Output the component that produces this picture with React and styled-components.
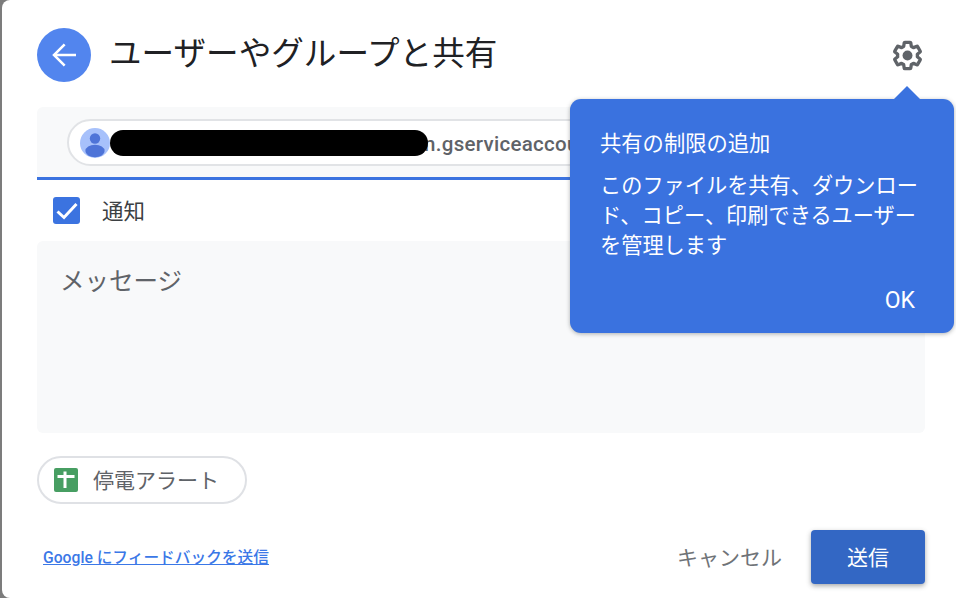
import React from "react";
import styled, { createGlobalStyle } from "styled-components";

const Global = createGlobalStyle`
  html, body {
    margin: 0;
    background: #7c7c7c;
  }
  * {
    box-sizing: border-box;
  }
`;

const FONT = `Roboto, "Noto Sans CJK JP", sans-serif`;

const App = () => {
  return (
    <>
      <Global />
      <Dialog>
        <Header>
          <BackButton>
            <svg width="32" height="32" viewBox="0 0 24 24" fill="none" stroke="#fff" strokeWidth="1.9">
              <path d="M21 12H4.5" />
              <path d="M12.5 4l-8 8 8 8" />
            </svg>
          </BackButton>
          <Title>ユーザーやグループと共有</Title>
          <GearButton>
            <svg width="33" height="33" viewBox="0 0 24 24" fill="none">
              <path
                stroke="#5f6368"
                strokeWidth="2.4"
                strokeLinejoin="round"
                d="M19.14 12.94c.04-.3.06-.61.06-.94 0-.32-.02-.64-.07-.94l2.03-1.58c.18-.14.23-.41.12-.61l-1.92-3.32c-.12-.22-.37-.29-.59-.22l-2.39.96c-.5-.38-1.03-.7-1.62-.94l-.36-2.54c-.04-.24-.24-.41-.48-.41h-3.84c-.24 0-.43.17-.47.41l-.36 2.54c-.59.24-1.13.57-1.62.94l-2.39-.96c-.22-.08-.47 0-.59.22L2.74 8.87c-.12.21-.08.47.12.61l2.03 1.58c-.05.3-.09.63-.09.94s.02.64.07.94l-2.03 1.58c-.18.14-.23.41-.12.61l1.92 3.32c.12.22.37.29.59.22l2.39-.96c.5.38 1.03.7 1.62.94l.36 2.54c.05.24.24.41.48.41h3.84c.24 0 .44-.17.47-.41l.36-2.54c.59-.24 1.13-.56 1.62-.94l2.39.96c.22.08.47 0 .59-.22l1.92-3.32c.12-.22.07-.47-.12-.61l-2.01-1.58z"
              />
              <circle cx="12" cy="12" r="3.6" fill="#5f6368" />
            </svg>
          </GearButton>
        </Header>

        <RecipientBox>
          <RecipientChip>
            <Avatar>
              <svg width="30" height="30" viewBox="0 0 30 30">
                <circle cx="15" cy="10.5" r="5.2" fill="#4e74d8" />
                <ellipse cx="15" cy="23" rx="9.6" ry="6.2" fill="#4e74d8" />
              </svg>
            </Avatar>
            <RecipientText>n.gserviceaccount.com</RecipientText>
            <Redaction />
          </RecipientChip>
        </RecipientBox>

        <NotifyRow>
          <Checkbox>
            <svg width="27" height="27" viewBox="0 0 27 27" fill="none" stroke="#fff" strokeWidth="3">
              <path d="M4.5 14.5l6.5 6L23.5 7" />
            </svg>
          </Checkbox>
          <NotifyLabel>通知</NotifyLabel>
        </NotifyRow>

        <MessageBox>
          <MessageHint>メッセージ</MessageHint>
        </MessageBox>

        <AttachmentChip>
          <SheetIcon>
            <svg width="24" height="24" viewBox="0 0 24 24">
              <rect width="24" height="24" rx="2" fill="#479e62" />
              <path d="M3.5 7h6V3.5h3V7h8v3h-8v10h-3V10h-6z" fill="#fff" />
            </svg>
          </SheetIcon>
          <AttachmentName>停電アラート</AttachmentName>
        </AttachmentChip>

        <Footer>
          <FeedbackLink href="#">Google にフィードバックを送信</FeedbackLink>
          <FooterActions>
            <CancelButton>キャンセル</CancelButton>
            <SendButton>送信</SendButton>
          </FooterActions>
        </Footer>

        <Tooltip>
          <TooltipTitle>共有の制限の追加</TooltipTitle>
          <TooltipBody>このファイルを共有、ダウンロード、コピー、印刷できるユーザーを管理します</TooltipBody>
          <TooltipOk>OK</TooltipOk>
        </Tooltip>
      </Dialog>
    </>
  );
};

const Dialog = styled.div`
  position: relative;
  width: 954px;
  height: 598px;
  margin-left: 2px;
  padding: 28px 31px 0 35px;
  background: #fff;
  border-radius: 8px 0 0 8px;
  overflow: hidden;
  font-family: ${FONT};
`;
const Header = styled.div`
  display: flex;
  align-items: center;
  height: 54px;
`;
const BackButton = styled.div`
  display: flex;
  flex: none;
  align-items: center;
  justify-content: center;
  width: 54px;
  height: 54px;
  border-radius: 50%;
  background: #5285ee;
`;
const Title = styled.h1`
  flex: 1;
  margin: -3px 0 0 18px;
  font-size: 32.6px;
  font-weight: 400;
  line-height: 48px;
  color: #202124;
`;
const GearButton = styled.div`
  display: flex;
  margin: 0 1.5px 0 0;
`;
const RecipientBox = styled.div`
  display: flex;
  align-items: center;
  height: 73px;
  margin-top: 25px;
  padding: 1px 30px 0;
  background: #f8f9fa;
  border-bottom: 3px solid #3b73e0;
  border-radius: 6px 6px 0 0;
`;
const RecipientChip = styled.div`
  position: relative;
  display: flex;
  align-items: center;
  width: 620px;
  height: 47px;
  padding-left: 11px;
  background: #fff;
  border: 2px solid #e1e3e6;
  border-radius: 24px;
  overflow: hidden;
`;
const Avatar = styled.div`
  display: flex;
  flex: none;
  width: 30px;
  height: 30px;
  border-radius: 50%;
  background: #a7c1fb;
  overflow: hidden;
`;
const RecipientText = styled.span`
  margin: 2px 0 0 314px;
  font-size: 20.5px;
  font-weight: 500;
  letter-spacing: 0.3px;
  color: #5f6368;
  white-space: nowrap;
`;
const Redaction = styled.div`
  position: absolute;
  left: 41px;
  top: 9px;
  width: 318px;
  height: 26px;
  background: #000;
  border-radius: 13px;
`;
const NotifyRow = styled.div`
  display: flex;
  align-items: center;
  height: 61px;
  padding-left: 16px;
`;
const Checkbox = styled.div`
  display: flex;
  width: 27px;
  height: 27px;
  background: #3b73e0;
  border-radius: 3px;
`;
const NotifyLabel = styled.span`
  margin: -2px 0 0 22px;
  font-size: 21.5px;
  color: #3c4043;
`;
const MessageBox = styled.div`
  height: 192px;
  padding: 21px 25px;
  background: #f8f9fa;
  border-radius: 6px;
`;
const MessageHint = styled.div`
  margin-left: -2px;
  font-size: 24.5px;
  line-height: 40px;
  color: #5f6368;
`;
const AttachmentChip = styled.div`
  display: flex;
  align-items: center;
  width: 210px;
  height: 48px;
  margin-top: 23px;
  padding-left: 15px;
  border: 2px solid #dfe1e5;
  border-radius: 24px;
`;
const SheetIcon = styled.div`
  display: flex;
`;
const AttachmentName = styled.span`
  margin: -2px 0 0 15px;
  font-size: 21px;
  color: #5f6368;
  white-space: nowrap;
`;
const Footer = styled.div`
  display: flex;
  align-items: center;
  justify-content: space-between;
  height: 54px;
  margin-top: 26px;
  padding-left: 6px;
`;
const FeedbackLink = styled.a`
  margin-top: -2px;
  font-size: 15.7px;
  font-weight: 500;
  color: #3b78e7;
  text-decoration: underline;
`;
const FooterActions = styled.div`
  display: flex;
  align-items: center;
  gap: 29px;
`;
const CancelButton = styled.span`
  margin-top: -3px;
  font-size: 21px;
  color: #6f7377;
`;
const SendButton = styled.div`
  display: flex;
  align-items: center;
  justify-content: center;
  width: 114px;
  height: 54px;
  padding-bottom: 2px;
  font-size: 21px;
  color: #fff;
  background: #3367c4;
  border-radius: 4px;
  box-shadow: 0 2px 5px rgba(60, 64, 67, 0.45);
`;
const Tooltip = styled.div`
  position: absolute;
  left: 568px;
  top: 99px;
  width: 384px;
  height: 234px;
  padding: 30px 28px 0 30px;
  color: #fff;
  background: #3a72df;
  border-radius: 11px;
  box-shadow: 0 1px 4px rgba(60, 64, 67, 0.4);
  &::before {
    content: "";
    position: absolute;
    right: 34px;
    top: -13px;
    border-left: 13px solid transparent;
    border-right: 13px solid transparent;
    border-bottom: 13px solid #3a72df;
  }
`;
const TooltipTitle = styled.div`
  font-size: 21.3px;
  line-height: 30px;
`;
const TooltipBody = styled.p`
  margin: 12px 0 0;
  font-size: 21.2px;
  line-height: 30px;
`;
const TooltipOk = styled.div`
  position: absolute;
  right: 39px;
  bottom: 17px;
  font-size: 23px;
  font-weight: 400;
  line-height: 30px;
`;

export default App;
